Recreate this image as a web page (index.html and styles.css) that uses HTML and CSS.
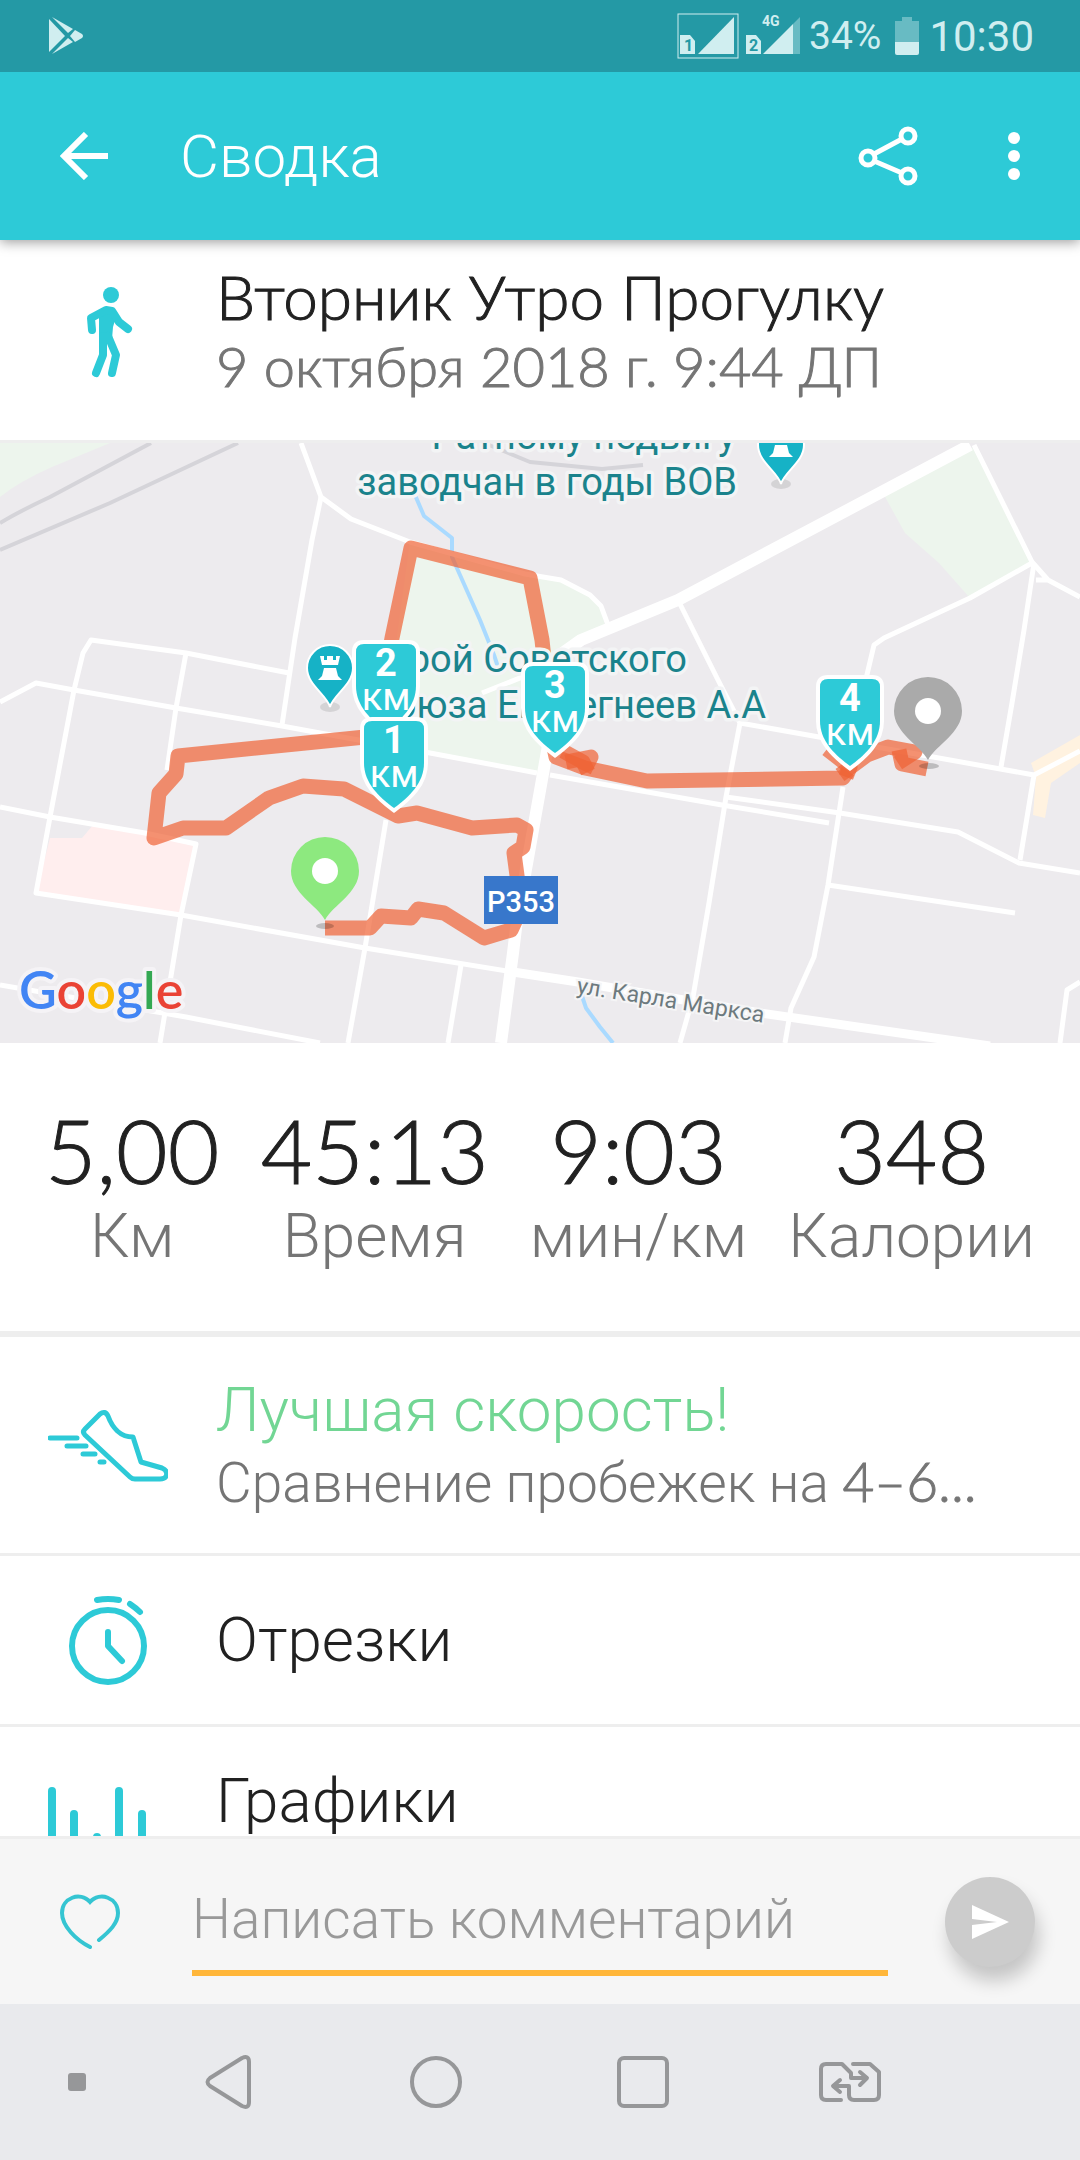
FILE: index.html
```html
<!DOCTYPE html>
<html lang="ru">
<head>
<meta charset="UTF-8">
<meta name="viewport" content="width=device-width, initial-scale=1.0">
<title>Сводка</title>
<link rel="stylesheet" href="styles.css">
</head>
<body>

<div class="status-bar">
  <svg class="play" width="36" height="40" viewBox="0 0 36 40" fill="currentColor">
    <path d="M1 3L17 20L1 36Z"/>
    <path d="M4 1L25 13L20 17Z"/>
    <path d="M27 14L34 18Q36 20 34 22L27 26L22 20Z"/>
    <path d="M4 38L25 26L20 22Z"/>
  </svg>
  <div class="status-icons">
    <svg width="62" height="46" viewBox="0 0 62 46" fill="currentColor">
      <rect x="1" y="1" width="60" height="44" fill="none" stroke="currentColor"/>
      <path d="M3 22H13L18 28V41H3Z"/>
      <path d="M21 41L57 4V41Z"/>
      <text class="sim-number" x="7" y="38">1</text>
    </svg>
    <svg width="56" height="46" viewBox="0 0 56 46" fill="currentColor">
      <path d="M1 22H11L16 28V41H1Z"/>
      <path d="M18 41L48 11V41Z"/>
      <path d="M48 11L55 4V41H48Z" opacity="0.4"/>
      <text class="sim-number" x="4" y="38">2</text>
      <text class="network" x="17" y="13">4G</text>
    </svg>
    <span class="battery-level">34%</span>
    <svg class="battery" width="24" height="38" viewBox="0 0 24 38" fill="currentColor">
      <path d="M7 0H17V4H24V25H0V4H7Z" opacity="0.4"/>
      <path d="M0 25H24V36Q24 38 22 38H2Q0 38 0 36Z"/>
    </svg>
    <span class="clock">10:30</span>
  </div>
</div>

<header class="app-bar">
  <button type="button" aria-label="Назад">
    <svg width="48" height="48" viewBox="0 0 48 48" fill="none" stroke="#fff" stroke-width="6">
      <path d="M48 24H5M26 2L4 24L26 46"/>
    </svg>
  </button>
  <h1>Сводка</h1>
  <button type="button" class="share" aria-label="Поделиться">
    <svg width="60" height="60" viewBox="0 0 60 60" fill="none" stroke="#fff" stroke-width="5">
      <circle cx="10" cy="32" r="7"/>
      <circle cx="50" cy="10" r="7"/>
      <circle cx="50" cy="50" r="7"/>
      <path d="M16 28L44 13M16 35L44 47"/>
    </svg>
  </button>
  <button type="button" aria-label="Ещё">
    <svg width="12" height="48" viewBox="0 0 12 48" fill="#fff">
      <circle cx="6" cy="6" r="6"/>
      <circle cx="6" cy="24" r="6"/>
      <circle cx="6" cy="42" r="6"/>
    </svg>
  </button>
</header>

<main>
  <section class="activity">
    <svg class="icon" viewBox="0 0 120 120">
      <circle cx="63" cy="24" r="8" fill="#2dcad7"/>
      <path d="M50 44L56 37Q61 34 66 40L68 46L65 56L64 68H51V47Z" fill="#2dcad7"/>
      <path d="M44 59L43 47L58 39L64 40L71 51L80 58M55 65V84L48 102M60 65L68 84L64 102"/>
    </svg>
    <div class="row-text">
      <h2 class="alt">Вторник Утро Прогулку</h2>
      <p class="alt">9 октября 2018 г. 9:44 ДП</p>
    </div>
  </section>

  <svg class="map" viewBox="0 0 1080 600" preserveAspectRatio="xMidYMid slice">
    <!-- areas -->
    <rect width="1080" height="600" fill="#edebee"/>
    <path class="park" d="M0 0H110L52 24Q20 38 0 54Z"/>
    <path class="park" d="M410 99L561 137L599 160L605 182L567 204L550 240L540 330L400 305L385 280Z"/>
    <path class="park" d="M974 4L884 52L905 90L939 120L970 155L1032 119Z"/>
    <path d="M50 395L82 395L93 382L145 390L196 401L181 472L36 450Z" fill="#ffeeee"/>
    <path d="M1031 320L1080 292V320L1051 340L1045 375L1033 372L1036 334Z" fill="#fff2e0"/>

    <!-- railway and water -->
    <path class="rail" d="M0 80Q20 68 50 54L151 0M0 107L110 60L238 0M489 2L530 19L602 26L643 22"/>
    <path class="water" d="M415 52L424 73L452 95V114L480 177L494 212L500 230M581 550L586 565L600 584L613 600"/>

    <!-- roads -->
    <g class="roads">
      <path d="M301 0L321 54L351 76L410 99L525 131L561 137L590 152L601 163L608 182"/>
      <path d="M321 54L312 97L295 195L282 282"/>
      <path d="M0 259L36 240L74 247L176 265L282 283L320 290L430 310L537 330"/>
      <path d="M289 230L186 210L91 197L83 210L74 247L50 374L36 450L181 472L365 505L513 529"/>
      <path d="M186 210L176 265L167 327"/>
      <path d="M0 364L50 374L145 390L196 401L181 472L160 600"/>
      <path d="M386 377L365 505L348 600M461 522L448 600"/>
      <path d="M0 542L186 574L320 600"/>
      <path d="M974 2L1032 119L1048 137L1080 154M1048 137H1036"/>
      <path d="M1032 120L970 155L884 195L874 202L865 240"/>
      <path d="M1034 120L1024 187L1012 260L1001 324"/>
      <path d="M678 157L697 195L717 235L740 280L726 354L709 460L693 554L680 600"/>
      <path d="M740 280L819 294L922 312L1034 332L1080 308M1034 332L1020 417"/>
      <path d="M550 332L722 362L829 380M726 354L840 370L958 389L1019 420L1080 430"/>
      <path d="M843 344L828 442L814 514L791 565L785 600M828 442L1015 470"/>
      <path d="M1080 539L1067 547L1060 600M482 250L540 227"/>
      <path class="street" d="M513 529L578 539L760 570L990 603"/>
      <path class="highway" d="M970 2L678 157L581 197L560 212L549 297L517 477L513 510L501 600"/>
    </g>

    <!-- track -->
    <path class="track" d="M325 485H370L381 473L411 475L418 466L444 470L484 495L511 487L517 474L518 440L514 410L523 404L526 387L517 382L472 385L417 370L398 373L344 346L303 343L269 355L226 385H183L154 395L159 350L176 331L178 313L375 293L392 195L411 105L530 135L542 197L553 300L556 314L585 325L647 338L843 335L848 328"/>
    <path class="track" d="M563 308L583 319L588 329"/>
    <path class="track" d="M566 319L591 314L584 328"/>
    <path class="track" d="M827 306L850 324L846 334"/>
    <path class="track" d="M840 332L867 312L888 304L915 309L898 320"/>
    <path class="track" d="M899 307L902 321L927 326"/>

    <!-- places -->
    <g class="poi">
      <text x="736" y="6" text-anchor="end">Ратному подвигу</text>
      <text x="737" y="52" text-anchor="end">заводчан в годы ВОВ</text>
      <text x="687" y="229" text-anchor="end">Герой Советского</text>
      <text x="766" y="275" text-anchor="end">Союза Евстегнеев А.А</text>
    </g>
    <text class="street-name" transform="translate(576 550) rotate(9)">ул. Карла Маркса</text>

    <g id="rook" transform="translate(330 225)">
      <ellipse cx="0" cy="39" rx="10" ry="5" fill="#000" opacity="0.1"/>
      <path d="M0 39C-3 27 -23 17 -23 0A23 23 0 0 1 23 0C23 17 3 27 0 39Z" fill="#16b2c6" stroke="#fff" stroke-width="2"/>
      <path d="M-10 -12H-6V-8H-3V-12H3V-8H6V-12H10L8 -3H-8ZM-6 0H6L8 8L12 12H-12L-8 8Z" fill="#fff"/>
    </g>
    <use href="#rook" x="451" y="-223"/>

    <rect x="484" y="433" width="74" height="48" fill="#3877cb"/>
    <text class="road-number" x="521" y="469" text-anchor="middle">Р353</text>

    <!-- start and finish -->
    <ellipse class="pin-shadow" cx="325" cy="483" rx="9" ry="3"/>
    <path d="M325 477C317 462 291 450 291 428A34 34 0 0 1 359 428C359 450 333 462 325 477Z" fill="#8de97f"/>
    <circle cx="325" cy="428" r="13" fill="#fff"/>
    <ellipse class="pin-shadow" cx="929" cy="323" rx="10" ry="3"/>
    <path d="M928 317C920 302 894 290 894 268A34 34 0 0 1 962 268C962 290 936 302 928 317Z" fill="#aaa"/>
    <circle cx="928" cy="268" r="13" fill="#fff"/>

    <!-- kilometre marks -->
    <g class="km" transform="translate(386 201)">
      <path d="M-30 8Q-30 0 -22 0H22Q30 0 30 8V42C30 62 15 76 0 87C-15 76 -30 62 -30 42Z"/>
      <text x="0" y="32">2</text>
      <text class="unit" x="0" y="66">км</text>
    </g>
    <g class="km" transform="translate(394 278)">
      <path d="M-30 8Q-30 0 -22 0H22Q30 0 30 8V42C30 62 15 76 0 87C-15 76 -30 62 -30 42Z"/>
      <text x="0" y="32">1</text>
      <text class="unit" x="0" y="66">км</text>
    </g>
    <g class="km" transform="translate(555 223)">
      <path d="M-30 8Q-30 0 -22 0H22Q30 0 30 8V42C30 62 15 76 0 87C-15 76 -30 62 -30 42Z"/>
      <text x="0" y="32">3</text>
      <text class="unit" x="0" y="66">км</text>
    </g>
    <g class="km" transform="translate(850 236)">
      <path d="M-30 8Q-30 0 -22 0H22Q30 0 30 8V42C30 62 15 76 0 87C-15 76 -30 62 -30 42Z"/>
      <text x="0" y="32">4</text>
      <text class="unit" x="0" y="66">км</text>
    </g>

    <text class="google" x="19" y="566"><tspan fill="#4285f4">G</tspan><tspan fill="#ea4335">o</tspan><tspan fill="#fbbc05">o</tspan><tspan fill="#4285f4">g</tspan><tspan fill="#34a853">l</tspan><tspan fill="#ea4335">e</tspan></text>
  </svg>

  <section class="stats">
    <div class="stat"><b>5,00</b><span>Км</span></div>
    <div class="stat"><b>45:13</b><span>Время</span></div>
    <div class="stat"><b>9:03</b><span>мин/км</span></div>
    <div class="stat"><b>348</b><span>Калории</span></div>
  </section>

  <a class="row tall" href="#compare">
    <svg class="icon thin" viewBox="48 35 120 120">
      <path d="M100 64L85 79Q82 82 85 85L130 127Q132 129 135 129H160C168 129 169 121 162 118L141 112L133 87C120 87 112 77 108 66Q105 60 100 64Z"/>
      <path d="M50 88H77M67 96H86M83 104H95M100 112H104"/>
    </svg>
    <div class="row-text">
      <h2 class="best">Лучшая скорость!</h2>
      <p>Сравнение пробежек на <span class="alt">4–6...</span></p>
    </div>
  </a>
  <a class="row" href="#splits">
    <svg class="icon" viewBox="0 0 120 120">
      <g stroke-width="6">
        <circle cx="60" cy="66" r="36"/>
        <path d="M60 52V66L74 81M49 20Q60 18 71 20M82 24Q88 28 92 32"/>
      </g>
    </svg>
    <div class="row-text"><h2>Отрезки</h2></div>
  </a>
  <a class="row tall charts" href="#charts">
    <svg class="icon" viewBox="0 0 120 120">
      <path d="M4 26V110M26 49V110M49 72V110M71 26V110M94 49V110M116 90V110"/>
    </svg>
    <div class="row-text"><h2>Графики</h2></div>
  </a>
</main>

<form class="comment">
  <button type="button" class="like" aria-label="Нравится">
    <svg width="60" height="56" viewBox="0 0 60 56" fill="none" stroke="#35c5d2" stroke-width="4" stroke-linecap="round">
      <path d="M39 46C50 37 58 29 58 19C58 4 40 -3 30 8C20 -3 2 4 2 19C2 32 16 46 30 53"/>
    </svg>
  </button>
  <input type="text" placeholder="Написать комментарий" aria-label="Написать комментарий">
  <button type="submit" class="send" aria-label="Отправить">
    <svg width="38" height="34" viewBox="0 0 38 34" fill="#fff">
      <path d="M1 0L38 17L1 34V20L26 17L1 14Z"/>
    </svg>
  </button>
</form>

<nav class="nav-bar">
  <span class="dot"></span>
  <button type="button" aria-label="Назад">
    <svg width="48" height="54" viewBox="0 0 48 54">
      <path d="M37 3Q44 0 44 7V47Q44 54 37 51L5 31Q0 27 5 23Z"/>
    </svg>
  </button>
  <button type="button" aria-label="Домой">
    <svg width="54" height="54" viewBox="0 0 54 54"><circle cx="27" cy="27" r="24"/></svg>
  </button>
  <button type="button" aria-label="Недавние">
    <svg width="54" height="54" viewBox="0 0 54 54"><rect x="3" y="3" width="48" height="48" rx="5"/></svg>
  </button>
  <button type="button" aria-label="Сменить SIM">
    <svg width="64" height="42" viewBox="0 0 64 42">
      <path d="M23 39H8Q3 39 3 34V8Q3 3 8 3H24L33 12V17H48M42 11L49 17L42 24"/>
      <path d="M35 3H52L61 11V34Q61 39 56 39H36Q31 39 31 34V25H16M22 19L15 25L22 31"/>
    </svg>
  </button>
</nav>

</body>
</html>
```
FILE: styles.css
```css
* {
  box-sizing: border-box;
}
body {
  margin: 0;
  height: 100vh;
  display: flex;
  flex-direction: column;
  font-family: Roboto, sans-serif;
  font-weight: 300;
  color: #212121;
  background-color: #fff;
}
h1, h2, p {
  margin: 0;
  font-weight: 300;
}
svg {
  display: block;
  flex-shrink: 0;
}
button {
  padding: 0;
  border: none;
  background: none;
  cursor: pointer;
}
.alt {
  font-family: Lato, sans-serif;
  -webkit-text-stroke: 1px;
}

/* status bar */
.status-bar {
  display: flex;
  align-items: center;
  justify-content: space-between;
  flex-shrink: 0;
  height: 72px;
  padding: 0 46px 0 48px;
  background-color: #2499a5;
  color: #d0eef0;
  font-weight: 400;
  position: relative;
  z-index: 2;
}
.status-icons {
  display: flex;
  align-items: center;
  gap: 6px;
}
.battery-level {
  margin-left: 2px;
  font-size: 39px;
}
.battery {
  margin: 0 4px 0 8px;
}
.clock {
  font-size: 42px;
}
.sim-number {
  font-size: 16px;
  font-weight: 700;
  fill: #2499a5;
}
.network {
  font-size: 14px;
  font-weight: 700;
}

/* app bar */
.app-bar {
  display: flex;
  align-items: center;
  flex-shrink: 0;
  height: 168px;
  padding: 0 60px;
  background-color: #2dcad7;
  box-shadow: 0 2px 12px rgba(0, 0, 0, 0.4);
  position: relative;
  z-index: 1;
}
.app-bar h1 {
  flex: 1;
  margin-left: 72px;
  font-size: 60px;
  color: #fff;
}
.share {
  margin-right: 90px;
}

/* content */
main {
  flex: 1;
  min-height: 0;
  overflow: hidden;
}
.activity {
  display: flex;
  align-items: center;
  height: 203px;
  padding-bottom: 18px;
  border-bottom: 3px solid #eee;
}
.icon {
  width: 120px;
  height: 120px;
  margin: 0 48px;
  fill: none;
  stroke: #2dcad7;
  stroke-width: 8;
  stroke-linecap: round;
  stroke-linejoin: round;
}
.activity .icon circle,
.activity .icon path:nth-child(2) {
  stroke: none;
}
.icon.thin {
  stroke-width: 5;
}
.row-text {
  flex: 1;
  min-width: 0;
  white-space: nowrap;
}
.row-text h2 {
  font-size: 62px;
  line-height: 72px;
}
.row-text p {
  font-size: 55px;
  line-height: 68px;
  color: #757575;
}
.row-text .alt {
  line-height: 70px;
}
.row-text p.alt {
  font-size: 56px;
}
.row-text .best {
  color: #72d694;
}
.row {
  display: flex;
  align-items: center;
  height: 171px;
  border-bottom: 3px solid #eee;
  color: inherit;
  text-decoration: none;
}
.tall {
  height: 219px;
}
.charts {
  align-items: flex-start;
  padding-top: 38px;
}

/* map */
.map {
  width: 100%;
  aspect-ratio: 9 / 5;
}
.park {
  fill: #edf5ed;
}
.rail, .water, .roads, .track {
  fill: none;
  stroke-linejoin: round;
}
.rail {
  stroke: #d5d4d9;
  stroke-width: 4;
}
.water {
  stroke: #aadaff;
  stroke-width: 4;
}
.roads {
  stroke: #fff;
  stroke-width: 5;
}
.street {
  stroke-width: 9;
}
.highway {
  stroke-width: 12;
}
.track {
  stroke: #ef6234;
  stroke-width: 15;
  opacity: 0.7;
}
.poi {
  font-size: 38px;
  font-weight: 400;
  fill: #1a838c;
  stroke: #f3f4f5;
  stroke-width: 7;
  stroke-linejoin: round;
  paint-order: stroke;
}
.street-name {
  font-size: 23px;
  font-weight: 400;
  fill: #6d7a7e;
  stroke: #f5f5f6;
  stroke-width: 4;
  paint-order: stroke;
}
.road-number {
  font-size: 29px;
  font-weight: 500;
  fill: #fff;
}
.pin-shadow {
  opacity: 0.2;
}
.km path {
  fill: #2dcad7;
  stroke: #fff;
  stroke-width: 8;
  paint-order: stroke;
}
.km text {
  font-size: 38px;
  font-weight: 700;
  fill: #fff;
  text-anchor: middle;
}
.km .unit {
  font-weight: 400;
}
.google {
  font-family: Lato, sans-serif;
  font-size: 52px;
  font-weight: 600;
  stroke: #f5f3f6;
  stroke-width: 8;
  stroke-linejoin: round;
  paint-order: stroke;
}

/* stats */
.stats {
  display: flex;
  justify-content: space-between;
  height: 294px;
  padding: 57px 45px 0;
  border-bottom: 6px solid #eee;
}
.stat {
  display: flex;
  flex-direction: column;
  align-items: center;
}
.stat b {
  font-family: Lato, sans-serif;
  font-size: 89px;
  font-weight: 300;
  line-height: 100px;
  -webkit-text-stroke: 1px;
}
.stat span {
  font-size: 62px;
  line-height: 72px;
  color: #757575;
}

/* comment */
.comment {
  display: flex;
  align-items: center;
  flex-shrink: 0;
  height: 168px;
  padding: 0 45px 0 60px;
  border-top: 3px solid #eee;
  background-color: #f6f6f6;
}
.comment input {
  flex: 1;
  min-width: 0;
  height: 108px;
  margin: 0 57px 0 72px;
  padding: 0;
  border: none;
  border-bottom: 6px solid #ffb639;
  background: none;
  font-family: inherit;
  font-size: 55px;
  font-weight: 300;
  outline: none;
}
.comment input::placeholder {
  color: #999;
  opacity: 1;
}
.send {
  display: flex;
  align-items: center;
  justify-content: center;
  width: 90px;
  height: 90px;
  border-radius: 50%;
  background-color: #ccc;
  box-shadow: 4px 14px 18px rgba(0, 0, 0, 0.2);
}

/* navigation bar */
.nav-bar {
  display: grid;
  grid-template-columns: 125px repeat(4, 1fr) 127px;
  align-items: center;
  justify-items: center;
  flex-shrink: 0;
  height: 156px;
  background-color: #e9eaed;
}
.nav-bar svg {
  fill: none;
  stroke: #969799;
  stroke-width: 4;
  stroke-linecap: round;
  stroke-linejoin: round;
}
.dot {
  justify-self: end;
  width: 18px;
  height: 18px;
  margin-right: 39px;
  border-radius: 3px;
  background-color: #969799;
}
```
